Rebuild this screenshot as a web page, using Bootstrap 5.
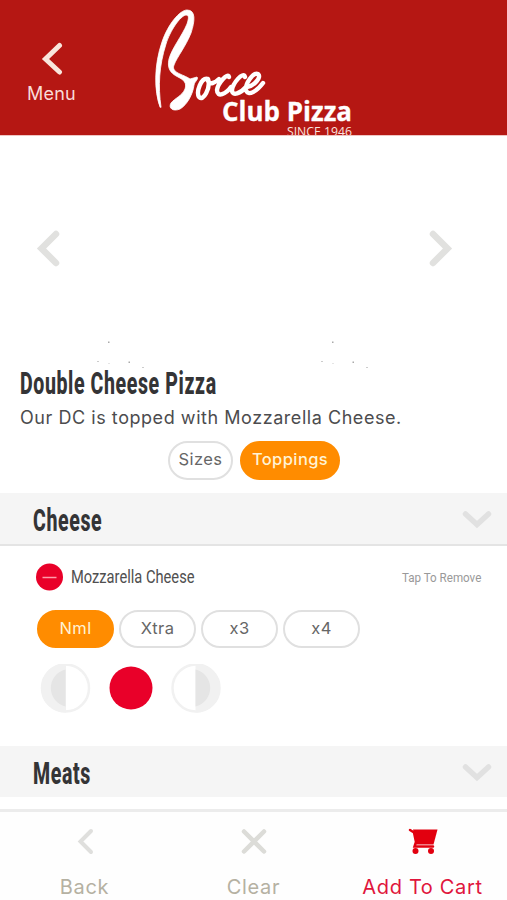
<!DOCTYPE html>
<html lang="en">
<head>
<meta charset="utf-8">
<meta name="viewport" content="width=device-width, initial-scale=1">
<title>Bocce Club Pizza</title>
<link rel="stylesheet" href="https://cdn.jsdelivr.net/npm/bootstrap@5.3.0/dist/css/bootstrap.min.css">
<style>
body{font-family:Inter,"Liberation Sans",sans-serif;color:#4c4c4e;width:507px;height:900px;overflow:hidden;background:#fff}
svg{display:block;flex:none}
button,a{font:inherit}
.top-bar{height:136px;background:#b51713;border-bottom:1px solid #efc5c3}
.menu-link{width:103px;padding-top:42px;color:#f9dcd8;font-size:18px;line-height:22px;letter-spacing:.2px}
.menu-link svg{margin-bottom:7px}
.carousel-area{height:232px;padding-top:10px}
.cond{display:inline-block;font-family:Roboto,sans-serif;white-space:nowrap;transform-origin:0 50%}
.heading{font-weight:800;font-size:32px;line-height:32px;color:#343436;letter-spacing:1px}
.h-title{transform:scaleX(.61)}
.product{height:125px;padding-left:20px}
.product .h-title{margin-top:-1px!important}
.desc{font-size:18px;line-height:24px;margin-top:6px;white-space:nowrap;letter-spacing:.55px}
.tabs-row{margin-top:11px;padding-left:148px;gap:7px}
.pill{height:39px;border:2px solid #e0e0e0;border-radius:20px;background:#fff;color:#666;padding:0 0 2px;font-size:16.5px;line-height:1;text-align:center;letter-spacing:.4px;white-space:nowrap}
.pill.on{background:#ff8c00;border-color:#ff8c00;color:#fff3d5}
.section-bar{height:51px;background:#f5f5f5;padding:0 15px 0 33px}
.section-bar .heading{padding-top:2px}
.section-bar.ruled{height:53px;border-bottom:2px solid #e4e4e4}
.cheese-body{height:200px;padding:17px 26px 0 36px}
.item-name{font-size:18px;line-height:28px;color:#505050;transform:scaleX(.815)}
.tap{font-size:13.5px;line-height:28px;color:#999;transform:scaleX(.86);transform-origin:100% 50%}
.amounts{gap:5px;margin-top:19px;padding-left:1px}
.amounts .pill{width:77px;height:38px}
.foot{height:91px;border-top:3px solid #ececec;margin-top:12px;background:#fefefe;font-size:20px;line-height:24px;color:#b5b1a2;letter-spacing:.65px}
.foot>div{width:169px;padding-top:16px}
.foot svg{margin-bottom:19px}
</style>
<script src="https://cdn.jsdelivr.net/npm/bootstrap@5.3.0/dist/js/bootstrap.bundle.min.js"></script>
</head>
<body>
<header class="top-bar d-flex">
  <a class="menu-link d-flex flex-column align-items-center text-decoration-none" href="#">
    <svg width="24" height="34" viewBox="41 42 24 34" fill="none" stroke="#f9e6dc" stroke-width="5" stroke-linecap="round"><path d="M60.500 45.500 46.500 59 60.500 72"/></svg>
    <span>Menu</span>
  </a>
  <svg width="260" height="135" viewBox="103 0 260 135" fill="#fff" stroke="#fff" stroke-linecap="round" stroke-linejoin="round">
    <path stroke-width=".8" d="M160 107C154 91 154 65 162 42C168 24 180 10 187 10C196 10 195 21 191 33C186 46 177 57 174 65C171 73 183 74 190 79L197 77C199 79 195 81 194 85C193 94 187 105 180 109C173 112 168 108 171 103C175 98 182 96 185 89C187 83 184 80 178 77C170 73 167 68 169 59C172 48 182 36 187 24C189 18 189 15 186 15C180 16 170 31 166 44C159 66 158 86 161 107Z"/>
    <path fill="none" stroke-width="4.400" d="M208 79C201 77 196 92 199 97C203 102 211 88 208 79M208 81C210 85 215 83 219 79M229 77C228 72 218 83 217 90C217 98 226 94 231 87M245 77C243 71 233 83 232 90C232 97 241 93 246 87M247 87C254 86 262 77 258 74C253 72 245 84 246 90C248 97 257 91 263 83"/>
    <text stroke-width=".3" x="222" y="120.500" textLength="130" lengthAdjust="spacingAndGlyphs" font-family="Open Sans" font-size="26" font-weight="700">Club Pizza</text>
    <text stroke="none" x="287" y="135.500" textLength="65" lengthAdjust="spacingAndGlyphs" font-family="Open Sans" font-size="12" fill="#f9e2df">SINCE 1946</text>
  </svg>
</header>
<main>
  <section class="carousel-area">
    <svg width="507" height="222" viewBox="0 146 507 222" fill="none">
      <g stroke="#e1e1df" stroke-width="6.500" stroke-linecap="round"><path d="M56 234 41.500 248.500 56 263"/><path d="M433 234 447.500 248.500 433 263"/></g>
      <g id="specks" fill="#aaa"><path d="M108 341.500h1.500v1.500h-1.500zM128.500 361.500h1.500v1.500h-1.500z"/><path fill="#ccc" d="M97 361h2v1h-2zM108.500 363h1v1h-1zM142 367h2v1h-2z"/></g>
      <use href="#specks" x="224"/>
    </svg>
  </section>
  <section class="product">
    <div><h1 class="cond heading h-title m-0">Double Cheese Pizza</h1></div>
    <p class="desc mb-0">Our DC is topped with Mozzarella Cheese.</p>
    <div class="tabs-row d-flex">
      <button class="pill" style="width:65px">Sizes</button>
      <button class="pill on fw-medium" style="width:100px">Toppings</button>
    </div>
  </section>
  <div class="section-bar ruled d-flex align-items-center justify-content-between">
    <h2 class="cond heading h-title m-0">Cheese</h2>
    <svg width="30" height="20" fill="none" stroke="#e1e1e1" stroke-width="5.500" stroke-linecap="round"><path d="M3.500 5 15 15.500 26.500 5"/></svg>
  </div>
  <section class="cheese-body">
    <div class="d-flex align-items-center">
      <svg width="27" height="28"><circle cx="13.500" cy="14" r="13.500" fill="#e90029"/><path d="M6.500 14.500h14" stroke="#ff9cab" stroke-width="1.500"/></svg>
      <span class="cond item-name ms-2">Mozzarella Cheese</span>
      <span class="cond tap ms-auto">Tap To Remove</span>
    </div>
    <div class="amounts d-flex">
      <button class="pill on">Nml</button><button class="pill">Xtra</button><button class="pill">x3</button><button class="pill">x4</button>
    </div>
    <svg class="mt-3" width="190" height="50" viewBox="36 663.500 190 50">
      <g fill="#fff" stroke="#f1f1f1" stroke-width="2.500"><circle cx="65.500" cy="687.500" r="23.500"/><circle cx="196" cy="687.500" r="23.500"/></g>
      <path fill="#f1f1f1" d="M66 663a24.500 24.500 0 0 0 0 49zM195.500 663a24.500 24.500 0 0 1 0 49z"/>
      <path fill="#e5e5e5" d="M65.500 669a19 19 0 0 0 0 37zM195.500 669a19 19 0 0 1 0 37z"/>
      <circle cx="131" cy="687.500" r="21.500" fill="#e90029"/>
    </svg>
  </section>
  <div class="section-bar d-flex align-items-center justify-content-between">
    <h2 class="cond heading h-title m-0">Meats</h2>
    <svg width="30" height="20" fill="none" stroke="#e1e1e1" stroke-width="5.500" stroke-linecap="round"><path d="M3.500 5 15 15.500 26.500 5"/></svg>
  </div>
</main>
<footer class="foot d-flex">
  <div class="d-flex flex-column align-items-center">
    <svg width="30" height="28" viewBox="70 828 30 28" fill="none" stroke="#dfdfdd" stroke-width="4" stroke-linecap="round"><path d="M91 831 80.500 841.500 91 852"/></svg>
    <span>Back</span>
  </div>
  <div class="d-flex flex-column align-items-center">
    <svg width="30" height="28" viewBox="239 828 30 28" fill="none" stroke="#dcdcd8" stroke-width="4.500" stroke-linecap="round"><path d="M244 831.500 264 851.500M264 831.500 244 851.500"/></svg>
    <span>Clear</span>
  </div>
  <div class="d-flex flex-column align-items-center" style="color:#e0153c">
    <svg width="30" height="28" viewBox="408 828 30 28" fill="#e2000f" stroke="#e2000f"><path stroke="none" d="M413 829.500H437.500L433.500 844.500H416z"/><path fill="none" stroke-width="2.500" stroke-linecap="round" d="M410 830 414 832.500 416 842 414.500 846.500H433"/><circle stroke="none" cx="415.500" cy="851" r="3"/><circle stroke="none" cx="431" cy="851" r="3"/></svg>
    <span>Add To Cart</span>
  </div>
</footer>
</body>
</html>
